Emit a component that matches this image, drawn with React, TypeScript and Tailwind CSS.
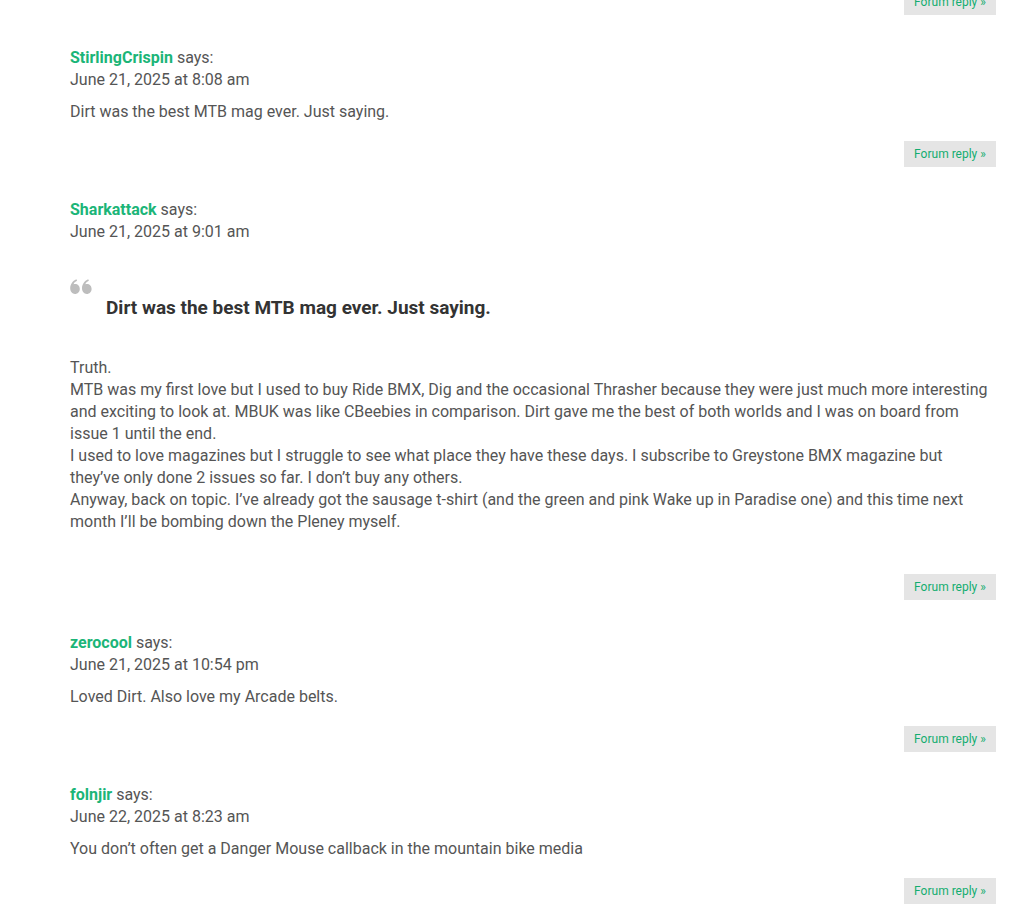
import React from 'react';

type Comment = {
  author: string;
  date: string;
  quote?: string;
  body: string[];
  extraSpace?: boolean;
};

const comments: Comment[] = [
  {
    author: 'StirlingCrispin',
    date: 'June 21, 2025 at 8:08 am',
    body: ['Dirt was the best MTB mag ever. Just saying.'],
  },
  {
    author: 'Sharkattack',
    date: 'June 21, 2025 at 9:01 am',
    quote: 'Dirt was the best MTB mag ever. Just saying.',
    body: [
      'Truth.',
      'MTB was my first love but I used to buy Ride BMX, Dig and the occasional Thrasher because they were just much more interesting and exciting to look at. MBUK was like CBeebies in comparison. Dirt gave me the best of both worlds and I was on board from issue 1 until the end.',
      'I used to love magazines but I struggle to see what place they have these days. I subscribe to Greystone BMX magazine but they\u2019ve only done 2 issues so far. I don\u2019t buy any others.',
      'Anyway, back on topic. I\u2019ve already got the sausage t-shirt (and the green and pink Wake up in Paradise one) and this time next month I\u2019ll be bombing down the Pleney myself.',
    ],
    extraSpace: true,
  },
  {
    author: 'zerocool',
    date: 'June 21, 2025 at 10:54 pm',
    body: ['Loved Dirt. Also love my Arcade belts.'],
  },
  {
    author: 'folnjir',
    date: 'June 22, 2025 at 8:23 am',
    body: ['You don\u2019t often get a Danger Mouse callback in the mountain bike media'],
  },
];

function ReplyButton({ className = '' }: { className?: string }) {
  return (
    <div className={`flex justify-end ${className}`}>
      <a className="flex h-[26px] w-[92px] items-center justify-center bg-[#e5e5e5] text-[12px] text-[#14ad70]">
        Forum reply »
      </a>
    </div>
  );
}

function QuoteMark() {
  return (
    <svg width="22" height="15" viewBox="0 0 22 15" className="text-[#bdbdbd]" fill="currentColor">
      <path d="M5 5c2.9 0 4.8 2.1 4.8 4.9S7.7 14.9 5 14.9 0.2 12.7 0.2 9.3C0.2 5.5 2.5 1.8 6.4 0.3l0.7 1.5C5.2 2.7 4 3.7 3.6 5.2 4.1 5.1 4.5 5 5 5z" />
      <path d="M16.8 5c2.9 0 4.8 2.1 4.8 4.9s-2.1 5-4.8 5-4.8-2.2-4.8-5.6c0-3.8 2.3-7.5 6.2-9l0.7 1.5c-1.9 0.9-3.1 1.9-3.5 3.4 0.5-0.1 0.9-0.2 1.4-0.2z" />
    </svg>
  );
}

function CommentItem({ c }: { c: Comment }) {
  return (
    <div className="mt-[32px]">
      <div className="text-[16px] leading-[22px] text-[#555]">
        <span className="font-bold text-[#1bb578]">{c.author}</span> says:
      </div>
      <div className="text-[16px] leading-[22px] text-[#555]">{c.date}</div>
      {c.quote && (
        <div className="mt-[36px] mb-[37px]">
          <QuoteMark />
          <p className="pl-[36px] pt-[2px] text-[19px] font-bold leading-[24px] text-[#333]">{c.quote}</p>
        </div>
      )}
      <div
        className={`mt-[10px] pr-[5px] text-[16px] leading-[22px] text-[#555] ${c.extraSpace ? 'mb-[41px]' : 'mb-[18px]'}`}
      >
        {c.body.map((line, i) => (
          <p key={i}>{line}</p>
        ))}
      </div>
      <ReplyButton />
    </div>
  );
}

export default function App() {
  return (
    <div className="min-h-screen overflow-hidden bg-white font-['Roboto','Liberation_Sans',sans-serif]">
      <div className="pl-[70px] pr-[15px]">
        <ReplyButton className="-mt-[11px]" />
        {comments.map((c) => (
          <CommentItem key={c.author} c={c} />
        ))}
      </div>
    </div>
  );
}
